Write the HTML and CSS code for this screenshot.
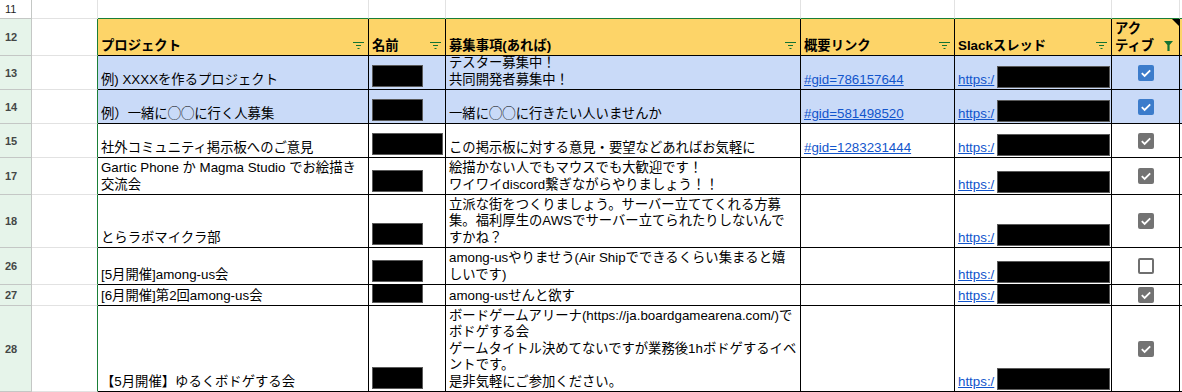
FILE: index.html
```html
<!DOCTYPE html>
<html lang="ja">

<head>
    <meta charset="UTF-8">
    <meta name="viewport" content="width=device-width, initial-scale=1.0">
    <title>社外コミュニティ掲示板</title>
    <link rel="stylesheet" href="styles.css">
</head>

<body>
    <div class="sheet">
        <!-- 11 -->
        <div class="row h19">
            <div class="rh plain">11</div>
            <div class="cell a top"></div>
            <div class="cell top open"></div>
            <div class="cell top open"></div>
            <div class="cell top open"></div>
            <div class="cell top open"></div>
            <div class="cell top open"></div>
            <div class="cell top open"></div>
            <div class="cell top open"></div>
        </div>

        <!-- 12: header -->
        <div class="row h37">
            <div class="rh">12</div>
            <div class="cell a"></div>
            <div class="cell head"><span>プロジェクト</span><svg class="filter" viewBox="0 0 11 7"><path d="M0 .5h11M3 3.5h5M4.5 6.5h2" /></svg></div>
            <div class="cell head"><span>名前</span><svg class="filter" viewBox="0 0 11 7"><path d="M0 .5h11M3 3.5h5M4.5 6.5h2" /></svg></div>
            <div class="cell head"><span>募集事項(あれば)</span><svg class="filter" viewBox="0 0 11 7"><path d="M0 .5h11M3 3.5h5M4.5 6.5h2" /></svg></div>
            <div class="cell head"><span>概要リンク</span><svg class="filter" viewBox="0 0 11 7"><path d="M0 .5h11M3 3.5h5M4.5 6.5h2" /></svg></div>
            <div class="cell head"><span>Slackスレッド</span><svg class="filter" viewBox="0 0 11 7"><path d="M0 .5h11M3 3.5h5M4.5 6.5h2" /></svg></div>
            <div class="cell head noted"><span>アク<br>ティブ</span><svg class="funnel" viewBox="0 0 9 10"><path d="M0 0h9L5.6 4V10H3.4V4z" /></svg></div>
            <div class="cell head"></div>
        </div>

        <!-- 13 -->
        <div class="row h34 blue">
            <div class="rh">13</div>
            <div class="cell a"></div>
            <div class="cell">例) XXXXを作るプロジェクト</div>
            <div class="cell"><span class="redact"></span></div>
            <div class="cell">テスター募集中！<br>共同開発者募集中！</div>
            <div class="cell"><a class="link" href="#gid=786157644">#gid=786157644</a></div>
            <div class="cell slack"><a class="link" href="#">https:/</a><span class="redact wide"></span></div>
            <div class="cell check"><span class="box on"><svg viewBox="0 0 16 16"><path d="M3.8 8.2l2.8 2.7L12.2 5.3" /></svg></span></div>
            <div class="cell"></div>
        </div>

        <!-- 14 -->
        <div class="row h34 blue">
            <div class="rh">14</div>
            <div class="cell a"></div>
            <div class="cell">例）一緒に◯◯に行く人募集</div>
            <div class="cell"><span class="redact"></span></div>
            <div class="cell">一緒に◯◯に行きたい人いませんか</div>
            <div class="cell"><a class="link" href="#gid=581498520">#gid=581498520</a></div>
            <div class="cell slack"><a class="link" href="#">https:/</a><span class="redact wide"></span></div>
            <div class="cell check"><span class="box on"><svg viewBox="0 0 16 16"><path d="M3.8 8.2l2.8 2.7L12.2 5.3" /></svg></span></div>
            <div class="cell"></div>
        </div>

        <!-- 15 -->
        <div class="row h34">
            <div class="rh">15</div>
            <div class="cell a"></div>
            <div class="cell">社外コミュニティ掲示板へのご意見</div>
            <div class="cell"><span class="redact long"></span></div>
            <div class="cell">この掲示板に対する意見・要望などあればお気軽に</div>
            <div class="cell"><a class="link" href="#gid=1283231444">#gid=1283231444</a></div>
            <div class="cell slack"><a class="link" href="#">https:/</a><span class="redact wide"></span></div>
            <div class="cell check"><span class="box"><svg viewBox="0 0 16 16"><path d="M3.8 8.2l2.8 2.7L12.2 5.3" /></svg></span></div>
            <div class="cell"></div>
        </div>

        <!-- 17 -->
        <div class="row h37">
            <div class="rh">17</div>
            <div class="cell a"></div>
            <div class="cell">Gartic Phone か Magma Studio でお絵描き<br>交流会</div>
            <div class="cell"><span class="redact"></span></div>
            <div class="cell">絵描かない人でもマウスでも大歓迎です！<br>ワイワイdiscord繋ぎながらやりましょう！！</div>
            <div class="cell"></div>
            <div class="cell slack"><a class="link" href="#">https:/</a><span class="redact wide"></span></div>
            <div class="cell check"><span class="box"><svg viewBox="0 0 16 16"><path d="M3.8 8.2l2.8 2.7L12.2 5.3" /></svg></span></div>
            <div class="cell"></div>
        </div>

        <!-- 18 -->
        <div class="row h53">
            <div class="rh">18</div>
            <div class="cell a"></div>
            <div class="cell">とらラボマイクラ部</div>
            <div class="cell"><span class="redact"></span></div>
            <div class="cell">立派な街をつくりましょう。サーバー立ててくれる方募<br>集。福利厚生のAWSでサーバー立てられたりしないんで<br>すかね？</div>
            <div class="cell"></div>
            <div class="cell slack"><a class="link" href="#">https:/</a><span class="redact wide"></span></div>
            <div class="cell check"><span class="box"><svg viewBox="0 0 16 16"><path d="M3.8 8.2l2.8 2.7L12.2 5.3" /></svg></span></div>
            <div class="cell"></div>
        </div>

        <!-- 26 -->
        <div class="row h37">
            <div class="rh">26</div>
            <div class="cell a"></div>
            <div class="cell">[5月開催]among-us会</div>
            <div class="cell"><span class="redact"></span></div>
            <div class="cell">among-usやりませう(Air Shipでできるくらい集まると嬉<br>しいです)</div>
            <div class="cell"></div>
            <div class="cell slack"><a class="link" href="#">https:/</a><span class="redact wide"></span></div>
            <div class="cell check"><span class="box off"></span></div>
            <div class="cell"></div>
        </div>

        <!-- 27 -->
        <div class="row h21">
            <div class="rh">27</div>
            <div class="cell a"></div>
            <div class="cell">[6月開催]第2回among-us会</div>
            <div class="cell"><span class="redact"></span></div>
            <div class="cell">among-usせんと欲す</div>
            <div class="cell"></div>
            <div class="cell slack"><a class="link" href="#">https:/</a><span class="redact wide"></span></div>
            <div class="cell check"><span class="box"><svg viewBox="0 0 16 16"><path d="M3.8 8.2l2.8 2.7L12.2 5.3" /></svg></span></div>
            <div class="cell"></div>
        </div>

        <!-- 28 -->
        <div class="row h86">
            <div class="rh">28</div>
            <div class="cell a"></div>
            <div class="cell">【5月開催】ゆるくボドゲする会</div>
            <div class="cell"><span class="redact"></span></div>
            <div class="cell">ボードゲームアリーナ(https://ja.boardgamearena.com/)で<br>ボドゲする会<br>ゲームタイトル決めてないですが業務後1hボドゲするイベ<br>ントです。<br>是非気軽にご参加ください。</div>
            <div class="cell"></div>
            <div class="cell slack"><a class="link" href="#">https:/</a><span class="redact wide"></span></div>
            <div class="cell check"><span class="box"><svg viewBox="0 0 16 16"><path d="M3.8 8.2l2.8 2.7L12.2 5.3" /></svg></span></div>
            <div class="cell"></div>
        </div>
    </div>
</body>

</html>
```

FILE: styles.css
```css
* {
    margin: 0;
    padding: 0;
    box-sizing: border-box;
}

body {
    overflow: hidden;
    background: #fff;
    font-family: 'Liberation Sans', Arial, 'Noto Sans CJK JP', sans-serif;
    font-size: 13.33px;
    color: #000;
}

.sheet {
    width: 1230px;
}

.row {
    display: grid;
    grid-template-columns: 32px 66px 271px 77px 355px 154px 157px 68px 50px;
}

.h19 { height: 19px; }
.h21 { height: 21px; }
.h34 { height: 34px; }
.h37 { height: 37px; }
.h53 { height: 53px; }
.h86 { height: 86px; }

/* row numbers */
.rh {
    display: flex;
    align-items: center;
    padding-left: 5px;
    background: #e6f4ea;
    border-right: 1px solid #c4c7c5;
    border-bottom: 1px solid #c4c7c5;
    font-size: 11px;
    font-weight: bold;
    color: #444746;
}

.rh.plain {
    background: #fff;
    font-weight: normal;
    color: #1f1f1f;
}

/* cells */
.cell {
    display: flex;
    flex-direction: column;
    justify-content: flex-end;
    padding: 0 3px 1px;
    border-right: 1px solid #000;
    border-bottom: 1px solid #000;
    line-height: 16.4px;
    white-space: nowrap;
    overflow: hidden;
}

.cell.a {
    border-right-color: #1a7f37;
    border-bottom-color: #e2e2e2;
}

.cell.top {
    border-right-color: #e2e2e2;
    border-bottom-color: #e2e2e2;
}

.cell.open {
    border-bottom-color: #1a7f37;
}

.blue .cell {
    background: #c9daf8;
}

.blue .cell.a {
    background: #fff;
}

/* header */
.head {
    position: relative;
    flex-direction: row;
    align-items: flex-end;
    justify-content: space-between;
    background: #fdd468;
    font-weight: bold;
}

.filter {
    width: 11px;
    height: 7px;
    margin: 0 1px 5px 0;
    flex-shrink: 0;
    fill: none;
    stroke: #137333;
    stroke-width: 1;
}

.funnel {
    width: 9px;
    height: 10px;
    margin: 0 3px 3px 0;
    flex-shrink: 0;
    fill: #137333;
}

.noted::after {
    content: "";
    position: absolute;
    top: 0;
    right: 0;
    border-top: 7px solid #000;
    border-left: 7px solid transparent;
}

.link {
    color: #1155cc;
    text-decoration: underline;
}

/* hidden names */
.redact {
    display: block;
    width: 51px;
    height: 22px;
    margin-bottom: 1px;
    background: #000;
    border: 1px solid #5a5a5a;
    flex-shrink: 0;
}

.redact.long {
    width: 71px;
}

.slack {
    flex-direction: row;
    align-items: flex-end;
    justify-content: flex-start;
}

.redact.wide {
    width: 113px;
    margin: 0 0 0 3px;
}

/* checkboxes */
.check {
    align-items: center;
    justify-content: center;
    padding: 0;
}

.box {
    display: block;
    width: 16px;
    height: 16px;
    border-radius: 2px;
    background: #737373;
}

.box.on {
    background: #3c7ccb;
}

.box.off {
    background: #fff;
    border: 2px solid #6f6f6f;
}

.box svg {
    display: block;
    width: 16px;
    height: 16px;
    fill: none;
    stroke: #fff;
    stroke-width: 1.8;
}
```
